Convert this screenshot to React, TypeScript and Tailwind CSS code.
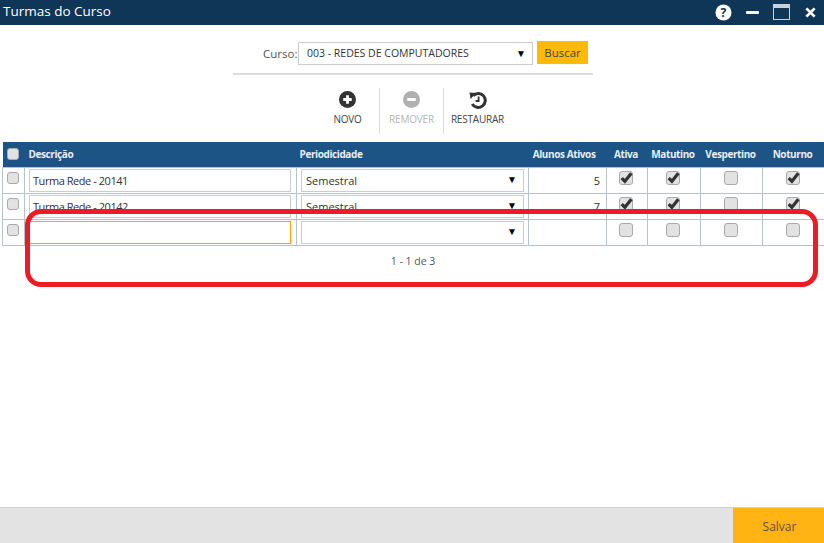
import React from 'react';

const rows = [
  { nome: 'Turma Rede - 20141', periodo: 'Semestral', alunos: '5', flags: [true, true, false, true] },
  { nome: 'Turma Rede - 20142', periodo: 'Semestral', alunos: '7', flags: [true, true, false, true] },
  { nome: '', periodo: '', alunos: '', flags: [false, false, false, false] },
];

function Check({ checked = false, small = false }: { checked?: boolean; small?: boolean }) {
  return (
    <span className={`relative block rounded-[3px] border border-[#a9a9a9] bg-[#e2e2e2] mx-auto ${small ? 'w-[12px] h-[12px]' : 'w-[14px] h-[14px]'}`}>
      {checked && (
        <svg viewBox="0 0 14 14" className="absolute left-[-1px] top-[-2px] w-[15px] h-[15px]">
          <path d="M2.5 7.5 L5.5 10.5 L11.5 3" fill="none" stroke="#333" strokeWidth="3" />
        </svg>
      )}
    </span>
  );
}

function Caret() {
  return <span className="text-[10px] leading-none text-black pb-[2px]">▼</span>;
}

function Tool({ label, disabled, wide, children }: { label: string; disabled?: boolean; wide?: boolean; children: React.ReactNode }) {
  return (
    <div className={`flex flex-col items-center ${wide ? 'w-[67px]' : 'w-[63px]'} ${disabled ? 'text-[#b5b5b5]' : 'text-[#444]'}`}>
      <div className="h-[20px] mt-[3px]">{children}</div>
      <span className="text-[10px] tracking-[-0.2px] mt-[1px] leading-[14px] whitespace-nowrap">{label}</span>
    </div>
  );
}

export default function App() {
  return (
    <div className="relative w-[824px] h-[543px] bg-white overflow-hidden flex flex-col font-['Open_Sans',sans-serif]">
      <div className="h-[25px] bg-[#0f3557] flex items-center pl-[3px] pr-[8px] text-white shrink-0">
        <span className="text-[13.5px] flex-1 mb-[2px]">Turmas do Curso</span>
        <svg viewBox="0 0 18 18" className="w-[17px] h-[17px] mr-[14px] mb-[1px]">
          <circle cx="9" cy="9" r="8.5" fill="#fff" />
          <text x="9" y="13.5" textAnchor="middle" fontSize="13" fontWeight="700" fill="#0f3557" fontFamily="Open Sans">?</text>
        </svg>
        <span className="w-[13px] h-[3px] bg-white rounded-[1px] mr-[14px] mb-[1px]" />
        <svg viewBox="0 0 17 16" className="w-[17px] h-[16px] mr-[15px] mb-[1px]">
          <rect x="0.5" y="0.5" width="16" height="15" fill="none" stroke="#c8d2db" />
          <rect x="1" y="1" width="15" height="3" fill="#c8d2db" />
        </svg>
        <svg viewBox="0 0 12 12" className="w-[11px] h-[11px] mb-[1px]">
          <path d="M1.5 1.5 L10.5 10.5 M10.5 1.5 L1.5 10.5" stroke="#fff" strokeWidth="3" />
        </svg>
      </div>

      <div className="flex items-start ml-[263px] mt-[16px] h-[24px]">
        <span className="w-[35px] text-[11.5px] text-[#555] mt-[4px]">Curso:</span>
        <div className="w-[235px] h-[23px] border border-[#ccc] flex items-center justify-between pl-[8px] pr-[6px] mt-[1px]">
          <span className="text-[10.5px] text-[#333]">003 - REDES DE COMPUTADORES</span>
          <Caret />
        </div>
        <button className="w-[51px] h-[23px] bg-[#ffba08] text-[11.5px] text-[#444] ml-[4px]">Buscar</button>
      </div>
      <div className="w-[360px] h-[2px] bg-[#ddd] ml-[233px] mt-[8px]" />

      <div className="flex ml-[316px] mt-[13px] h-[46px]">
        <Tool label="NOVO">
          <svg viewBox="0 0 18 18" className="w-[17px] h-[17px]">
            <circle cx="9" cy="9" r="9" fill="#333" />
            <path d="M9 4.5 V13.5 M4.5 9 H13.5" stroke="#fff" strokeWidth="3" />
          </svg>
        </Tool>
        <div className="w-px bg-[#ddd]" />
        <Tool label="REMOVER" disabled>
          <svg viewBox="0 0 18 18" className="w-[17px] h-[17px]">
            <circle cx="9" cy="9" r="9" fill="#b0b0b0" />
            <path d="M4.5 9 H13.5" stroke="#fff" strokeWidth="3" />
          </svg>
        </Tool>
        <div className="w-px bg-[#ddd]" />
        <Tool label="RESTAURAR" wide>
          <svg viewBox="0 0 18 18" className="w-[18px] h-[18px]">
            <path d="M4.2 4.6 A7 7 0 1 1 3.2 13" fill="none" stroke="#333" strokeWidth="3" />
            <path d="M0.5 1.5 L7.4 2 L1.5 8 Z" fill="#333" />
            <path d="M9.6 5.5 V10 H6.6" fill="none" stroke="#333" strokeWidth="1.8" />
          </svg>
        </Tool>
      </div>

      <div className="ml-[2px] mt-[8px]">
        <table className="table-fixed border-collapse w-[822px] text-[11px]">
          <colgroup>
            <col className="w-[22px]" />
            <col className="w-[272px]" />
            <col className="w-[232px]" />
            <col className="w-[78px]" />
            <col className="w-[41px]" />
            <col className="w-[53px]" />
            <col className="w-[62px]" />
            <col className="w-[62px]" />
          </colgroup>
          <thead>
            <tr className="h-[25px] bg-[#1c5486] text-[#e8eef4] text-[10px] tracking-[-0.4px]">
              <th className="font-bold p-0 pr-[1px] pb-[1px]"><Check small /></th>
              <th className="text-left font-bold pl-[4px]">Descrição</th>
              <th className="text-left font-bold pl-[3px]">Periodicidade</th>
              <th className="text-right font-bold pr-[11px]">Alunos Ativos</th>
              <th className="text-center font-bold pr-[2px]">Ativa</th>
              <th className="text-center font-bold pr-[2px]">Matutino</th>
              <th className="text-center font-bold pr-[2px]">Vespertino</th>
              <th className="text-center font-bold pr-[2px]">Noturno</th>
            </tr>
          </thead>
          <tbody>
            {rows.map((r, i) => (
              <tr key={i} className="h-[26px] text-[#333]">
                <td className="border border-[#b4c4c9] p-0 pr-[1px] pb-[4px]"><Check small /></td>
                <td className="border border-[#b4c4c9] pl-[4px] pr-[5px] py-0">
                  <div className={`h-[23px] border flex items-center pl-[3px] pt-[2px] text-[11px] tracking-[-0.45px] ${i === 2 ? 'border-[#f7a600]' : 'border-[#ccc]'}`}>{r.nome}</div>
                </td>
                <td className="border border-[#b4c4c9] px-[4px] py-0">
                  <div className="h-[23px] border border-[#ccc] flex items-center justify-between pl-[4px] pr-[6px] text-[11px]">
                    <span className="pt-[2px]">{r.periodo}</span>
                    <Caret />
                  </div>
                </td>
                <td className="border border-[#b4c4c9] text-right pr-[6px] pt-[2px]">{r.alunos}</td>
                {r.flags.map((f, j) => (
                  <td key={j} className="border border-[#b4c4c9] p-0 pr-[2px] pb-[4px]"><Check checked={f} /></td>
                ))}
              </tr>
            ))}
          </tbody>
        </table>
        <div className="text-center text-[10.5px] text-[#555] mt-[8px]">1 - 1 de 3</div>
      </div>

      <div className="absolute left-[25px] top-[209px] w-[793px] h-[78px] border-[5px] border-[#ed1c24] rounded-[16px]" />

      <div className="mt-auto h-[36px] bg-[#e3e3e3] border-t border-[#cfcfcf] flex justify-end">
        <button className="w-[91px] bg-[#ffb414] text-[12px] text-[#5f5236] pt-[3px] pl-[2px]">Salvar</button>
      </div>
    </div>
  );
}
